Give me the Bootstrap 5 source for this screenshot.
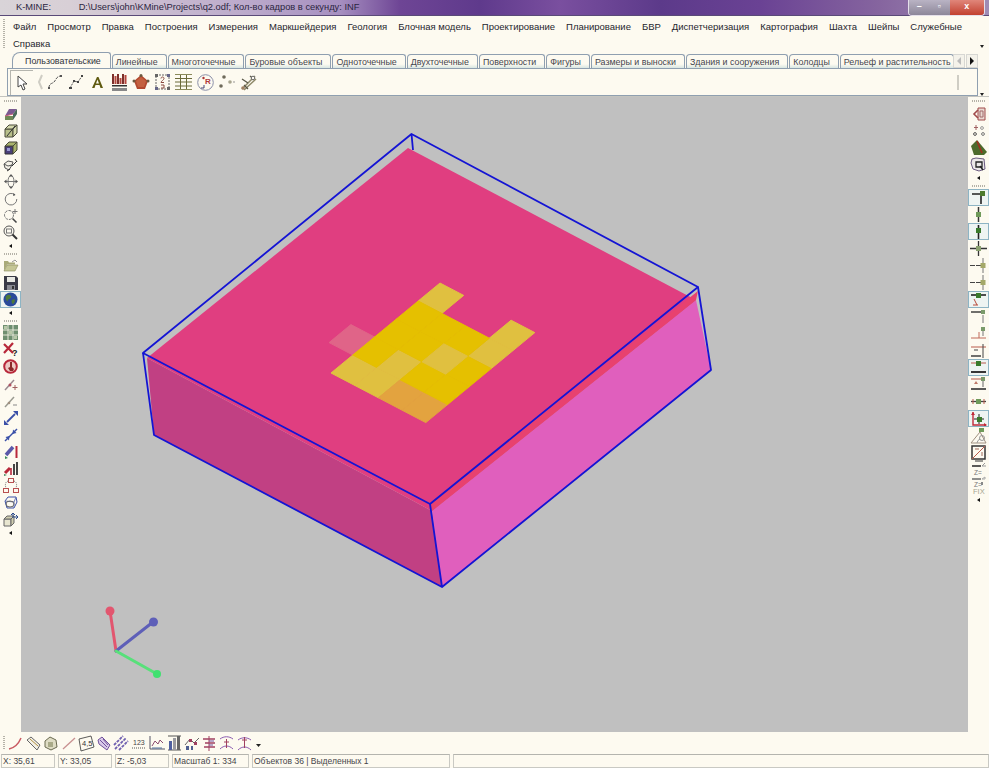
<!DOCTYPE html>
<html lang="ru">
<head>
<meta charset="UTF-8">
<title>K-MINE</title>
<link href="https://cdn.jsdelivr.net/npm/bootstrap@5.3.0/dist/css/bootstrap.min.css" rel="stylesheet">
<style>
html, body { height: 100%; }
body { background: #fdfaf0; font-family: "Liberation Sans", Arial, sans-serif; font-size: 10px; color: #222; overflow: hidden; }
.k-win { width: 989px; height: 768px; }
.k-title { height: 16px; border-bottom: 1px solid #5a4a78; font-size: 9.3px; color: #2b2540; line-height: 15px; padding-left: 16px;
  background: linear-gradient(90deg, #d9d4d8 0, #d8cfd6 70px, #bba9cb 250px, #a68fc0 340px, #6e4595 400px, #5f3a8c 480px, #7a4f9f 560px, #5c3a8a 660px, #6a4294 760px, #86659f 880px, #9f8cb5 989px); }
.k-title-path { margin-left: 27.5px; }
.k-winbtns { width: 77px; height: 16px; margin-left: auto; margin-right: 4px; border: 1px solid #e5e0ea; border-top: 0; border-radius: 0 0 4px 4px; overflow: hidden; }
.k-winbtn { flex: 1 1 0; color: #fff; font-size: 9px; line-height: 13px; text-align: center; font-weight: 700; background: linear-gradient(#b9b3c4, #8d8799); }
.k-winbtn-close { flex: 1.7 1 0; background: linear-gradient(#e0867a, #c2402f); }
.k-menu { height: 36px; padding: 2px 0 0 13px; position: relative; }
.k-menu span { color: #26262e; line-height: 17px; height: 17px; margin-right: 11px; white-space: nowrap; font-size: 9.5px; }
.k-grip-h { width: 3px; background-image: linear-gradient(#b5b2a8 50%, transparent 50%); background-size: 2px 2px; background-repeat: repeat-y; }
.k-menu .k-grip-h { position: absolute; left: 3px; top: 3px; bottom: 3px; }
.k-more { position: absolute; width: 0; height: 0; border-left: 2px solid transparent; border-right: 2px solid transparent; border-top: 3px solid #222; }
.k-more-menu { right: 5px; top: 29px; }
.k-more-bar { left: 972px; top: 24px; }
.k-tabsrow { height: 16px; padding-left: 12px; position: relative; }
.k-tabsrow .nav-tabs { border: 0; flex-wrap: nowrap; gap: 1px; }
.k-tabsrow .nav-link { display: block; height: 14px; margin: 2px 0 0 0; padding: 0 8px 0 3px; border: 1px solid #8f9fb0; border-bottom: 0; border-radius: 4px 3px 0 0; background: linear-gradient(#fdfaf0 70%, #d8e6e2); color: #44464e; font-size: 8.9px; line-height: 14px; white-space: nowrap; }
.k-tabsrow .nav-link.active { height: 16px; margin-top: 0; line-height: 16px; border-color: #8f9fb0; border-top-left-radius: 8px; background: #fdfaf0; color: #30323a; padding: 0 9px 0 12px; position: relative; z-index: 2; margin-bottom: -1px; }
.k-tabsrow .nav-item:last-child .nav-link { padding-right: 2px; }
.k-scroll { position: absolute; top: 2px; left: 953px; gap: 1px; }
.k-scroll b { display: block; width: 12px; height: 14px; border: 1px solid #d7d7d3; background: #f4f2ea; }
.k-scroll svg { display: block; margin: 2px auto; }
.k-bar { height: 28px; margin: 0 11px 0 7px; border: 1px solid #8f9fb0; align-items: center; padding-left: 2px; position: relative; }
.k-cursor { width: 23px; height: 25px; border-top: 1px solid #b5b5ae; border-left: 1px solid #b5b5ae; display: flex; align-items: center; justify-content: center; }
.k-tool { flex: 0 0 auto; width: 21.5px; display: flex; justify-content: center; align-items: center; }
.k-sep { flex: 0 0 auto; width: 14px; margin-right: -3px; display: flex; justify-content: center; }
.k-barend { position: absolute; left: 949px; top: 6px; width: 2px; height: 15px; background: #cfcdc4; }
.k-line { height: 1px; background: #c4c4bf; }
.k-main { height: 635px; }
.k-side { width: 21px; flex: 0 0 21px; align-items: center; }
.k-side-r { width: 21px; flex: 0 0 21px; }
.k-ic { height: 17px; width: 100%; display: flex; align-items: center; justify-content: center; flex: 0 0 17px; }
.k-grip { height: 7px; flex: 0 0 7px; width: 100%; display: flex; align-items: center; justify-content: center; }
.k-grip-first { height: 8px; flex: 0 0 8px; }
.k-grip i { display: block; width: 14px; height: 2px; background-image: linear-gradient(90deg, #b5b2a8 50%, transparent 50%); background-size: 2px 2px; }
.k-arr { height: 9px; flex: 0 0 9px; display: flex; align-items: center; justify-content: center; width: 100%; }
.k-arr i { display: block; width: 0; height: 0; border-top: 2.5px solid transparent; border-bottom: 2.5px solid transparent; border-right: 3px solid #111; }
.k-boxed { background: #eef4f2; outline: 1px solid #8db4c4; outline-offset: -1px; }
.k-ic svg, .k-tool svg, .k-cursor svg { display: block; overflow: visible; }
.k-canvas { flex: 1 1 auto; background: #c0c0c0; min-width: 0; }
.k-canvas svg { display: block; }
.k-bottom { height: 22px; padding-left: 3px; align-items: center; }
.k-bottom .k-tool { width: 17.6px; }
.k-bottom .k-tool-last { width: 10px; }
.k-bottom .k-grip-h { height: 14px; margin-right: 1px; }
.k-status { height: 14px; gap: 3px; padding-left: 1px; }
.k-cell { height: 14px; border: 1px solid #c9c9c3; border-top-color: #b4b4ae; padding-left: 1px; font-size: 8.5px; line-height: 13px; color: #45454a; white-space: nowrap; overflow: hidden; }
.k-cell-xyz { width: 54px; }
.k-cell-scale { width: 77px; }
.k-cell-obj { width: 198px; }
</style>
</head>
<body>
<div class="k-win d-flex flex-column">

  <div class="k-title d-flex">
    <span>K-MINE:</span>
    <span class="k-title-path">D:\Users\john\KMine\Projects\q2.odf; Кол-во кадров в секунду: INF</span>
    <div class="k-winbtns d-flex">
      <div class="k-winbtn">–</div>
      <div class="k-winbtn">▫</div>
      <div class="k-winbtn k-winbtn-close">x</div>
    </div>
  </div>

  <div class="k-menu d-flex flex-wrap align-content-start">
    <div class="k-grip-h"></div>
    <span>Файл</span><span>Просмотр</span><span>Правка</span><span>Построения</span><span>Измерения</span><span>Маркшейдерия</span><span>Геология</span><span>Блочная модель</span><span>Проектирование</span><span>Планирование</span><span>БВР</span><span>Диспетчеризация</span><span>Картография</span><span>Шахта</span><span>Шейпы</span><span>Служебные</span><span>Справка</span>
    <div class="k-more k-more-menu"></div>
  </div>

  <div class="k-tabsrow d-flex">
    <ul class="nav nav-tabs">
      <li class="nav-item"><a class="nav-link active" href="#">Пользовательские</a></li>
      <li class="nav-item"><a class="nav-link" href="#">Линейные</a></li>
      <li class="nav-item"><a class="nav-link" href="#">Многоточечные</a></li>
      <li class="nav-item"><a class="nav-link" href="#">Буровые объекты</a></li>
      <li class="nav-item"><a class="nav-link" href="#">Одноточечные</a></li>
      <li class="nav-item"><a class="nav-link" href="#">Двухточечные</a></li>
      <li class="nav-item"><a class="nav-link" href="#">Поверхности</a></li>
      <li class="nav-item"><a class="nav-link" href="#">Фигуры</a></li>
      <li class="nav-item"><a class="nav-link" href="#">Размеры и выноски</a></li>
      <li class="nav-item"><a class="nav-link" href="#">Здания и сооружения</a></li>
      <li class="nav-item"><a class="nav-link" href="#">Колодцы</a></li>
      <li class="nav-item"><a class="nav-link" href="#">Рельеф и растительность</a></li>
    </ul>
    <div class="k-scroll d-flex">
      <b><svg width="6" height="8"><path d="M5 0v8L1 4z" fill="#bbb"/></svg></b>
      <b><svg width="6" height="8"><path d="M1 0v8l4-4z" fill="#111"/></svg></b>
    </div>
  </div>

  <div class="k-bar d-flex">
    <div class="k-cursor"><svg width="12" height="16" viewBox="0 0 12 16"><path d="M2 1v11l3-2 2 5 2-1-2-5h4z" fill="#fff" stroke="#444"/></svg></div>
    <div class="k-sep"><svg width="5" height="16"><path d="M4 1L1 8l3 7" fill="none" stroke="#cfcdc4" stroke-width="2"/></svg></div>
    <div class="k-tool"><svg width="16" height="16" viewBox="0 0 16 16"><path d="M2 14c0-5 3-4 5-6s2-5 6-6" fill="none" stroke="#555" stroke-dasharray="3 1"/><rect x="1" y="13" width="2" height="2" fill="#555"/><rect x="13" y="1" width="2" height="2" fill="#555"/></svg></div>
    <div class="k-tool"><svg width="16" height="16" viewBox="0 0 16 16"><path d="M2 14L6 7l4 1 4-6" fill="none" stroke="#555" stroke-dasharray="2 1"/><rect x="1" y="13" width="3" height="2" fill="#444"/><rect x="5" y="6" width="2" height="2" fill="#444"/><rect x="9" y="7" width="2" height="2" fill="#444"/><rect x="13" y="1" width="2" height="2" fill="#444"/></svg></div>
    <div class="k-tool"><svg width="13" height="13" viewBox="0 0 13 13"><path d="M1 12L6 1h1.500L12 12H9.500L8.500 9h-4L3.500 12zM5 7.500h3L6.500 3.500z" fill="#5f5a10"/></svg></div>
    <div class="k-tool"><svg width="17" height="19" viewBox="0 0 17 19"><path d="M2 1v10M7 1v10M12 1v10" stroke="#7c2f2a" stroke-width="2"/><path d="M4.500 3v8M9.500 5v6M14.500 2v9" stroke="#b5463d" stroke-width="2"/><rect x="1" y="12" width="15" height="1.500" fill="#333"/><rect x="1" y="15" width="15" height="3" fill="#888"/></svg></div>
    <div class="k-tool"><svg width="18" height="17" viewBox="0 0 18 17"><path d="M9 1l7 6-3 8H5L2 7z" fill="#b2482e"/><path d="M9 3l5 4-2 6H6L4 7z" fill="#c4603f"/><circle cx="2" cy="7" r="1.500" fill="#6b5a40"/><circle cx="16" cy="7" r="1.500" fill="#6b5a40"/><circle cx="9" cy="1.500" r="1.500" fill="#6b5a40"/></svg></div>
    <div class="k-tool"><svg width="15" height="16" viewBox="0 0 15 16"><rect x="1" y="1" width="13" height="14" fill="#fdfaf0" stroke="#666" stroke-dasharray="2 1"/><rect x="0" y="0" width="3" height="3" fill="#666"/><rect x="12" y="13" width="3" height="3" fill="#666"/><rect x="0" y="13" width="3" height="3" fill="#668"/><rect x="12" y="0" width="3" height="3" fill="#668"/><path d="M6 4.500c0-2 3-2 3 0 0 1.500-3 2.500-3 4h3M6 11h3v3H6" fill="none" stroke="#8a4a40"/></svg></div>
    <div class="k-tool"><svg width="17" height="16" viewBox="0 0 17 16"><path d="M0 4.500h17M0 8h17M0 12h17M5.500 1v14M11.500 1v14" stroke="#6b6a3a"/><path d="M0 .5h17M0 15.500h17" stroke="#8b8a5a"/></svg></div>
    <div class="k-tool"><svg width="17" height="17" viewBox="0 0 17 17"><circle cx="8.500" cy="8.500" r="7.800" fill="#fdfaf0" stroke="#8a8fa8"/><text x="8" y="10" font-size="8" font-weight="700" fill="#b03a3a" font-family="Liberation Sans, sans-serif">R</text><circle cx="6.500" cy="4" r="1.200" fill="#a33"/><path d="M7 11v3H4" fill="none" stroke="#447" stroke-width="1"/></svg></div>
    <div class="k-tool"><svg width="16" height="14" viewBox="0 0 16 14"><circle cx="5" cy="2" r="1.800" fill="#6e6a5a"/><circle cx="2" cy="11" r="1.800" fill="#6e6a5a"/><circle cx="11" cy="7" r="1.800" fill="#a8a58f"/><circle cx="15" cy="7" r=".8" fill="#888"/></svg></div>
    <div class="k-tool"><svg width="17" height="17" viewBox="0 0 17 17"><path d="M2 15L15 2M4 16L16 5" stroke="#8f8a6a" stroke-width="1.500"/><path d="M2 5l6 4M10 2l4 3M4 11l4 4" stroke="#5a5848" stroke-width="1.300"/><circle cx="3" cy="14" r="1.800" fill="#a08060"/><circle cx="13" cy="4" r="1.800" fill="#fdfaf0" stroke="#666"/></svg></div>
    <div class="k-barend"></div>
    <div class="k-more k-more-bar"></div>
  </div>
  <div class="k-line"></div>

  <div class="k-main d-flex">
    <div class="k-side d-flex flex-column">
      <div class="k-grip k-grip-first"><i></i></div>
      <div class="k-ic"><svg width="14" height="14" viewBox="0 0 14 14"><path d="M1 9l4-7h8L9 7z" fill="#7b5a90"/><path d="M1 9h8v4H1z" fill="#6f8a55"/><path d="M9 7l4-5v5l-4 6z" fill="#4b6a5a"/><path d="M1 9l8-2" stroke="#c85a7a"/></svg></div>
      <div class="k-ic"><svg width="14" height="14" viewBox="0 0 14 14"><path d="M1 5h8v8H1z" fill="#b9c08a" stroke="#4a4a3a"/><path d="M1 5l4-4h8l-4 4zM9 5l4-4v8l-4 4z" fill="#d4d8ac" stroke="#4a4a3a"/><path d="M3 12l8-10" stroke="#333"/></svg></div>
      <div class="k-ic"><svg width="14" height="14" viewBox="0 0 14 14"><path d="M1 5h8v8H1z" fill="#4a3f7a" stroke="#333"/><path d="M1 5l4-4h8l-4 4zM9 5l4-4v8l-4 4z" fill="#a9b36c" stroke="#4a4a3a"/><path d="M3 7h3v3H3z" fill="#9a9ad0"/></svg></div>
      <div class="k-ic"><svg width="15" height="14" viewBox="0 0 15 14"><path d="M1 6l4-3 5 1-1 3-4 1zM1 6l1 4 4 2 3-5" fill="#f3f0e6" stroke="#555"/><path d="M9 8l5-5M12 1l2 3M4 13l3-2" stroke="#333"/></svg></div>
      <div class="k-ic"><svg width="14" height="15" viewBox="0 0 14 15"><ellipse cx="7" cy="7.500" rx="3" ry="6" fill="none" stroke="#777"/><path d="M1 7.500h12" stroke="#777"/><path d="M7 0l2 2.500H5zM7 15l2-2.500H5zM0 7.500L2.500 5.500v4zM14 7.500l-2.500-2v4z" fill="#555"/></svg></div>
      <div class="k-ic"><svg width="14" height="14" viewBox="0 0 14 14"><path d="M11 3a5.800 5.800 0 1 0 1.800 4" fill="none" stroke="#777"/><path d="M9.500 1l2 2-2.500 1z" fill="#555"/></svg></div>
      <div class="k-ic"><svg width="15" height="15" viewBox="0 0 15 15"><circle cx="6" cy="7" r="4.500" fill="none" stroke="#777" stroke-dasharray="3 1"/><path d="M9.500 10.500l4 4" stroke="#444" stroke-width="1.600"/><path d="M12 1v5M9.500 3.500h5" stroke="#777"/></svg></div>
      <div class="k-ic"><svg width="15" height="15" viewBox="0 0 15 15"><circle cx="6" cy="6" r="5" fill="#fdfaf0" stroke="#555"/><rect x="3.500" y="4" width="5" height="4" fill="none" stroke="#777"/><path d="M9.500 9.500l4.500 4.500" stroke="#333" stroke-width="2"/></svg></div>
      <div class="k-arr"><i></i></div>
      <div class="k-grip"><i></i></div>
      <div class="k-ic"><svg width="15" height="13" viewBox="0 0 15 13"><path d="M1 2h4l1 1.500h6v2H4l-3 6z" fill="#a9aa78"/><path d="M4 6h11l-3 6H1z" fill="#c5c695" stroke="#86875a" stroke-width=".6"/><path d="M9 3l3-2 2 2" fill="none" stroke="#999"/></svg></div>
      <div class="k-ic"><svg width="14" height="14" viewBox="0 0 14 14"><path d="M0 0h12l2 2v12H0z" fill="#3a3a46"/><path d="M3 1h8v5H3z" fill="#e8e8e2"/><path d="M3 9h8v5H3z" fill="#8a8a92"/><path d="M8 10h2v3H8z" fill="#333"/></svg></div>
      <div class="k-ic k-boxed"><svg width="15" height="15" viewBox="0 0 15 15"><circle cx="7.500" cy="7.500" r="7" fill="#2a4a9a"/><path d="M3 4c2-2 4-1 5 0s-1 3-2 3-1 3-2 2-2-3-1-5zM9 8c1-1 3-1 3 0s-1 4-2 4-2-3-1-4z" fill="#4d7a3a"/></svg></div>
      <div class="k-arr"><i></i></div>
      <div class="k-grip"><i></i></div>
      <div class="k-ic"><svg width="15" height="15" viewBox="0 0 15 15"><rect width="15" height="15" fill="#6f8f70"/><path d="M0 5h15M0 10h15M5 0v15M10 0v15" stroke="#e8e8d8"/><path d="M1 1h3v3H1zM6 6h3v3H6zM11 11h3v3h-3z" fill="#b8c8a8"/></svg></div>
      <div class="k-ic"><svg width="15" height="15" viewBox="0 0 15 15"><path d="M1 2l9 9M10 1L1 11" stroke="#b8283a" stroke-width="2.200"/><text x="9" y="14" font-size="9" font-weight="700" fill="#222" font-family="Liberation Sans, sans-serif">?</text></svg></div>
      <div class="k-ic"><svg width="15" height="15" viewBox="0 0 15 15"><circle cx="7.500" cy="7.500" r="6.300" fill="#eec9c4" stroke="#b8283a" stroke-width="2"/><path d="M7 3h2v5l2 2-1 2H7L5 9l2-1z" fill="#8a2a2a"/></svg></div>
      <div class="k-ic"><svg width="14" height="14" viewBox="0 0 14 14"><path d="M1 13L10 3" stroke="#9a8a90" stroke-width="1.500"/><circle cx="6" cy="8" r="1.500" fill="#b05060"/><path d="M11 8v5M8.500 10.500h5" stroke="#a06060"/></svg></div>
      <div class="k-ic"><svg width="14" height="14" viewBox="0 0 14 14"><path d="M1 13L10 3" stroke="#9a9a90" stroke-width="1.500"/><circle cx="5" cy="9" r="1.300" fill="#a09080"/><path d="M9 11h4" stroke="#888"/></svg></div>
      <div class="k-ic"><svg width="14" height="14" viewBox="0 0 14 14"><path d="M3 11l8-8" stroke="#3a50a8" stroke-width="1.800"/><path d="M9 0h5v5zM0 9v5h5z" fill="#3a50a8"/></svg></div>
      <div class="k-ic"><svg width="14" height="14" viewBox="0 0 14 14"><path d="M1 13L13 1" stroke="#3a50a8" stroke-width="1.500"/><path d="M9 1.500l3.500 3.500-4 1zM5 12.500L1.500 9l4-1z" fill="#3a50a8"/></svg></div>
      <div class="k-ic"><svg width="14" height="15" viewBox="0 0 14 15"><path d="M2 11l7-8" stroke="#5a58a8" stroke-width="3.500"/><path d="M1 12l3 2-3 1z" fill="#3a8a5a"/><path d="M12.500 2v12" stroke="#b8283a" stroke-width="2"/></svg></div>
      <div class="k-ic"><svg width="15" height="15" viewBox="0 0 15 15"><path d="M2 12l5-5" stroke="#b8283a" stroke-width="3"/><path d="M1 13l3 1-3 1z" fill="#3a8a5a"/><path d="M8 7v7" stroke="#b8283a" stroke-width="1.600"/><path d="M11 3v11M14 1v13" stroke="#333" stroke-width="1.800"/></svg></div>
      <div class="k-ic"><svg width="16" height="15" viewBox="0 0 16 15"><rect x="5.500" y=".5" width="5" height="4" fill="none" stroke="#b85050"/><rect x=".5" y="10.500" width="5" height="4" fill="none" stroke="#b85050"/><rect x="10.500" y="10.500" width="5" height="4" fill="none" stroke="#b85050"/><path d="M5 3C2 4 2 7 3 10M11 3c3 1 3 4 2 7" fill="none" stroke="#777" stroke-dasharray="1 1"/></svg></div>
      <div class="k-ic"><svg width="14" height="15" viewBox="0 0 14 15"><path d="M1 6l3-4h8l1 5-3 6H3z" fill="none" stroke="#3a50a8"/><path d="M1 6l9 1 2-5M10 7v6" fill="none" stroke="#6a7ab8"/><ellipse cx="6" cy="9" rx="4" ry="3" fill="none" stroke="#666"/></svg></div>
      <div class="k-ic"><svg width="15" height="15" viewBox="0 0 15 15"><path d="M1 7h7v7H1z" fill="#e8e6d0" stroke="#666"/><path d="M1 7l3-3h7l-3 3zM8 7l3-3v7l-3 3z" fill="#cfcdb0" stroke="#666"/><path d="M10 1v5M8 3l2-2 2 2M11 5h4M13 3l2 2-2 2" fill="none" stroke="#2a4a8a"/></svg></div>
      <div class="k-arr"><i></i></div>
    </div>

    <div class="k-canvas">
      <svg id="scene" width="947" height="635" viewBox="21 97 947 635">
        <polygon points="147,358 432,511 442,587 154,435" fill="#c14083"/>
        <polygon points="696,300 711,370 442,587 432,511" fill="#e05fbd"/>
        <polygon points="408,148 696,300 432,511 147,358" fill="#e03e80"/>
        <polygon points="698,291 696,300 432,511 430,504" fill="#e8416f"/>
        <g id="cells"></g>
        <g fill="none" stroke="#1414d4" stroke-width="1.800" stroke-linejoin="round">
          <polygon points="411.500,134 698,287 430,504 143,353"/>
          <path d="M143,353L154,435L442,587L711,370L698,287M430,504L442,587M411.500,134L413,150"/>
        </g>
        <g fill="none" stroke-width="3" stroke-linecap="round">
          <path d="M116,651L110,611" stroke="#e2566f"/>
          <path d="M116,651L153,622" stroke="#5e5fb8"/>
          <path d="M116,651L157,674" stroke="#58e07a"/>
        </g>
        <circle cx="110" cy="611" r="4.500" fill="#e2566f"/>
        <circle cx="153.500" cy="622" r="4.500" fill="#5e5fb8"/>
        <circle cx="157" cy="674" r="4" fill="#40e070"/>
      </svg>
    </div>

    <div class="k-side k-side-r d-flex flex-column">
      <div class="k-grip k-grip-first"><i></i></div>
      <div class="k-ic"><svg width="14" height="14" viewBox="0 0 14 14"><path d="M6 1h7v12H6z" fill="#e9d8d0" stroke="#a04a4a"/><path d="M8 4h3v6H8z" fill="none" stroke="#a06a6a"/><path d="M6 3L2 7l4 4" fill="none" stroke="#a04a4a" stroke-width="1.600"/></svg></div>
      <div class="k-ic"><svg width="14" height="14" viewBox="0 0 14 14"><circle cx="3" cy="10" r="1.400" fill="none" stroke="#555"/><circle cx="11" cy="10" r="1.400" fill="none" stroke="#777"/><circle cx="10" cy="4" r="1.400" fill="none" stroke="#999"/><path d="M4 1v5M2 3.500h4" stroke="#a06060"/></svg></div>
      <div class="k-ic"><svg width="16" height="15" viewBox="0 0 16 15"><path d="M0 6l6-6 10 12-3 3H3z" fill="#4d6a2c"/><path d="M6 1l5 12" stroke="#a03020" stroke-width="1.600"/></svg></div>
      <div class="k-ic"><svg width="15" height="15" viewBox="0 0 15 15"><path d="M1 2l4-1 8 1 1 10-6 2-6-2-2-6z" fill="#ece8e8" stroke="#6a5a80"/><path d="M5 5h6v5H5z" fill="none" stroke="#222" stroke-width="1.300"/><path d="M9 9l3 4" stroke="#222" stroke-width="1.400"/></svg></div>
      <div class="k-arr"><i></i></div>
      <div class="k-grip"><i></i></div>
      <div class="k-ic k-boxed"><svg width="15" height="14" viewBox="0 0 15 14"><path d="M1 3h9M10 3v10" stroke="#222" stroke-width="1.600"/><rect x="9" y="0" width="5" height="5" fill="#4d7a2c"/></svg></div>
      <div class="k-ic"><svg width="15" height="15" viewBox="0 0 15 15"><path d="M7.500 0v15" stroke="#333" stroke-width="1.500"/><rect x="5" y="5" width="5" height="5" fill="#6f9a5a"/></svg></div>
      <div class="k-ic k-boxed"><svg width="15" height="14" viewBox="0 0 15 14"><path d="M7.500 0v14" stroke="#222" stroke-width="1.600"/><rect x="5" y="3" width="5" height="5" fill="#3a7a2c"/></svg></div>
      <div class="k-ic"><svg width="17" height="15" viewBox="0 0 17 15"><path d="M0 7.500h17M8.500 0v15" stroke="#333" stroke-width="1.300"/><rect x="6" y="5" width="5" height="5" fill="#8aa070"/></svg></div>
      <div class="k-ic"><svg width="17" height="15" viewBox="0 0 17 15"><path d="M0 7.500h14" stroke="#444" stroke-dasharray="5 1"/><path d="M13 0v15" stroke="#777"/><rect x="10.500" y="5" width="5" height="5" fill="#a4a868"/></svg></div>
      <div class="k-ic"><svg width="17" height="15" viewBox="0 0 17 15"><path d="M0 7.500h14" stroke="#444" stroke-dasharray="5 1"/><path d="M13 0v15" stroke="#777"/><rect x="10.500" y="5" width="5" height="5" fill="#a4a868"/></svg></div>
      <div class="k-ic k-boxed"><svg width="17" height="15" viewBox="0 0 17 15"><path d="M1 3h15" stroke="#222" stroke-width="1.600"/><rect x="6" y="1" width="5" height="5" fill="#3a7a2c"/><path d="M4 7l3 6M8 13H3" stroke="#b84a3a"/></svg></div>
      <div class="k-ic"><svg width="17" height="15" viewBox="0 0 17 15"><path d="M1 3h10" stroke="#333" stroke-width="1.400"/><rect x="11" y="1" width="4" height="4" fill="#7a9a6a"/><path d="M13 6v8" stroke="#777"/></svg></div>
      <div class="k-ic"><svg width="17" height="15" viewBox="0 0 17 15"><rect x="11" y="1" width="4" height="4" fill="#7a9a6a"/><path d="M13 5v5" stroke="#777"/><path d="M1 12h15" stroke="#c06a5a"/><path d="M9 6v6" stroke="#c06a5a"/></svg></div>
      <div class="k-ic"><svg width="17" height="15" viewBox="0 0 17 15"><path d="M1 4h15" stroke="#b85a4a"/><path d="M4 7h4M13 1v14" stroke="#444"/><path d="M1 13h10" stroke="#333" stroke-width="1.400"/></svg></div>
      <div class="k-ic k-boxed"><svg width="17" height="15" viewBox="0 0 17 15"><path d="M1 3h15" stroke="#b85a4a"/><rect x="6" y="1" width="5" height="5" fill="#3a7a2c"/><path d="M1 12h15" stroke="#222" stroke-width="1.800"/></svg></div>
      <div class="k-ic"><svg width="17" height="15" viewBox="0 0 17 15"><path d="M1 2h11" stroke="#b85a4a"/><rect x="11" y="0" width="4" height="4" fill="#7a9a6a"/><path d="M13 4v6" stroke="#666"/><path d="M6 4l2 3H4z" fill="#c07a6a"/><path d="M1 12h15" stroke="#333" stroke-width="1.600"/></svg></div>
      <div class="k-ic"><svg width="17" height="15" viewBox="0 0 17 15"><path d="M1 7.500h15" stroke="#444" stroke-width="1.300"/><rect x="6" y="5" width="5" height="5" fill="#6f9a5a"/><path d="M3 5v5M14 5v5" stroke="#b85a4a"/></svg></div>
      <div class="k-ic k-boxed"><svg width="17" height="16" viewBox="0 0 17 16"><path d="M3 1v13h13" fill="none" stroke="#c02a3a" stroke-width="1.400"/><path d="M1 4l2-3 2 3M14 12l3 2-3 2" fill="#c02a3a"/><path d="M9 3v10M4 8h10" stroke="#222"/><rect x="7" y="6" width="5" height="5" fill="#3a7a2c"/></svg></div>
      <div class="k-ic"><svg width="17" height="16" viewBox="0 0 17 16"><path d="M1 15L10 4l6 11z" fill="none" stroke="#a09080"/><path d="M7 15a5 5 0 0 1 3-4" fill="none" stroke="#999"/><circle cx="12" cy="10" r="2.500" fill="none" stroke="#999"/><rect x="9" y="0" width="5" height="4" fill="#6f9a5a"/></svg></div>
      <div class="k-ic"><svg width="15" height="16" viewBox="0 0 15 16"><rect x="1" y="1" width="13" height="13" fill="none" stroke="#333" stroke-width="1.500"/><path d="M1 14L14 1" stroke="#b85a4a"/><path d="M4 4h4M11 11v-4" stroke="#a06a5a"/><path d="M4 16h8" stroke="#333"/></svg></div>
      <div class="k-ic"><svg width="17" height="15" viewBox="0 0 17 15"><path d="M2 4h9" stroke="#333" stroke-width="1.600"/><path d="M12 4l3-3M12 4h4" fill="none" stroke="#999"/><text x="4" y="13" font-size="6.500" fill="#777" font-family="Liberation Sans, sans-serif">Z=</text></svg></div>
      <div class="k-ic"><svg width="17" height="15" viewBox="0 0 17 15"><path d="M2 0h9" stroke="#555" stroke-width="1.300"/><path d="M12 0l3-2v2z" fill="none" stroke="#aaa"/><text x="4" y="7.500" font-size="6.500" fill="#777" font-family="Liberation Sans, sans-serif">Z=</text><rect x="11" y="3" width="2" height="3" fill="#888"/><text x="3" y="15" font-size="7.500" fill="#a5a590" font-family="Liberation Sans, sans-serif">FIX</text></svg></div>
      <div class="k-arr"><i></i></div>
    </div>
  </div>

  <div class="k-bottom d-flex">
    <div class="k-grip-h"></div>
    <div class="k-tool"><svg width="15" height="14" viewBox="0 0 15 14"><path d="M1 13c5-1 9-4 12-11" fill="none" stroke="#c85a62" stroke-width="1.500"/></svg></div>
    <div class="k-tool"><svg width="15" height="15" viewBox="0 0 15 15"><path d="M1 4l4-3 9 8-3 5z" fill="#f3f0e6" stroke="#666"/><path d="M4 3l8 7" stroke="#b09040"/></svg></div>
    <div class="k-tool"><svg width="15" height="15" viewBox="0 0 15 15"><path d="M2 5l5-4 6 3 1 7-6 3-6-3z" fill="#dedcc4" stroke="#6a6a50"/><rect x="5" y="6" width="5" height="5" fill="#a9aa88"/></svg></div>
    <div class="k-tool"><svg width="14" height="14" viewBox="0 0 14 14"><path d="M1 13L13 2" stroke="#c89090" stroke-width="1.300"/></svg></div>
    <div class="k-tool"><svg width="17" height="17" viewBox="0 0 17 17"><path d="M1 4L13 1l3 11-13 4z" fill="#fdfaf0" stroke="#333" stroke-width=".8"/><text x="4" y="11" font-size="7.500" fill="#333" font-family="Liberation Sans, sans-serif">4,5</text></svg></div>
    <div class="k-tool"><svg width="15" height="15" viewBox="0 0 15 15"><path d="M2 4l4-3 8 8-3 5-8-6z" fill="#d9c9ea" stroke="#70509a"/><path d="M4 4l7 7M7 3l5 6" stroke="#70509a"/></svg></div>
    <div class="k-tool"><svg width="16" height="16" viewBox="0 0 16 16"><path d="M1 10l9-9M2 14l11-11M6 15l9-9" stroke="#7060b0" stroke-width="1.800" stroke-dasharray="3 1"/></svg></div>
    <div class="k-tool"><svg width="16" height="13" viewBox="0 0 16 13"><text x="2" y="8" font-size="7" fill="#444" font-family="Liberation Sans, sans-serif">123</text><path d="M1 11h14" stroke="#555" stroke-dasharray="1 1"/></svg></div>
    <div class="k-tool"><svg width="16" height="14" viewBox="0 0 16 14"><path d="M1 0v13h15" fill="none" stroke="#556"/><path d="M3 10l3-5 3 3 2-4 3 3" fill="none" stroke="#8a4a70"/><path d="M3 12h10" stroke="#5070a0"/></svg></div>
    <div class="k-tool"><svg width="15" height="16" viewBox="0 0 15 16"><path d="M1 1h13M1 15h13" stroke="#555"/><rect x="2" y="6" width="3" height="9" fill="#5060a0"/><rect x="6" y="3" width="3" height="12" fill="#9a9aa0"/><rect x="10" y="1" width="3" height="14" fill="#666"/></svg></div>
    <div class="k-tool"><svg width="16" height="15" viewBox="0 0 16 15"><path d="M1 9l5-6 4 4 5-5" fill="none" stroke="#666"/><path d="M5 3h3v3H5zM10 6h3v3h-3z" fill="#a04060"/><path d="M2 10h3v4H2zM7 10h2v4H7z" fill="#506090"/></svg></div>
    <div class="k-tool"><svg width="15" height="15" viewBox="0 0 15 15"><path d="M7 0v15" stroke="#a04060"/><path d="M1 3h12M3 7h10M2 11h11" stroke="#a04060" stroke-width="1.600"/><path d="M7 5h5M7 9h4" stroke="#7050a0"/></svg></div>
    <div class="k-tool"><svg width="15" height="15" viewBox="0 0 15 15"><path d="M1 3c4-3 9-3 13 0M1 13c4-4 9-4 13 0" fill="none" stroke="#8a5ab0"/><path d="M7.500 3v9M5 6h5" stroke="#a04060"/></svg></div>
    <div class="k-tool"><svg width="15" height="15" viewBox="0 0 15 15"><path d="M1 4c4-3 9-3 13 0M1 14c4-4 9-4 13 0" fill="none" stroke="#8a5ab0"/><path d="M7.500 1v11M5 4h5" stroke="#a04060"/></svg></div>
    <div class="k-tool k-tool-last"><svg width="5" height="8" viewBox="0 0 5 8"><path d="M0 5h5L2.500 8z" fill="#222"/></svg></div>
  </div>

  <div class="k-status d-flex">
    <div class="k-cell k-cell-xyz">X: 35,61</div>
    <div class="k-cell k-cell-xyz">Y: 33,05</div>
    <div class="k-cell k-cell-xyz">Z: -5,03</div>
    <div class="k-cell k-cell-scale">Масштаб 1: 334</div>
    <div class="k-cell k-cell-obj">Объектов 36 | Выделенных 1</div>
    <div class="k-cell flex-grow-1"></div>
  </div>
</div>

<script>
  // map cells lie on a skewed grid on the top face of the block
  var LIGHT = "#e0c040", DARK = "#e5c000", ORANGE = "#e3a33f", PALE = "#e06488";
  var cells = [
    [-1,3,PALE],
    [0,0,LIGHT],[3,0,LIGHT],[3,1,LIGHT],[0,4,LIGHT],[1,4,LIGHT],[1,3,LIGHT],
    [2,4,ORANGE],[3,4,ORANGE],
    [0,1,DARK],[1,1,DARK],[2,1,DARK],[0,2,DARK],[1,2,DARK],[0,3,DARK],[2,3,DARK],[3,2,DARK],[3,3,DARK],[2,2,DARK]
  ];
  function pt(i, j) {
    return (440 + i * 23.7 - j * 21.8).toFixed(1) + "," + (283 + i * 12.4 + j * 18).toFixed(1);
  }
  function quad(i, j, colour) {
    return '<polygon points="' + pt(i, j) + " " + pt(i + 1, j) + " " + pt(i + 1, j + 1) + " " + pt(i, j + 1) + '" fill="' + colour + '" stroke="' + colour + '" stroke-width="1"/>';
  }
  var html = "";
  cells.forEach(function (c) { html += quad(c[0], c[1], c[2]); });
  html += quad(2, 2, LIGHT); // drawn last so the dark stroke does not bite it
  document.getElementById("cells").innerHTML = html;
</script>
<script src="https://cdn.jsdelivr.net/npm/bootstrap@5.3.0/dist/js/bootstrap.bundle.min.js"></script>
</body>
</html>
